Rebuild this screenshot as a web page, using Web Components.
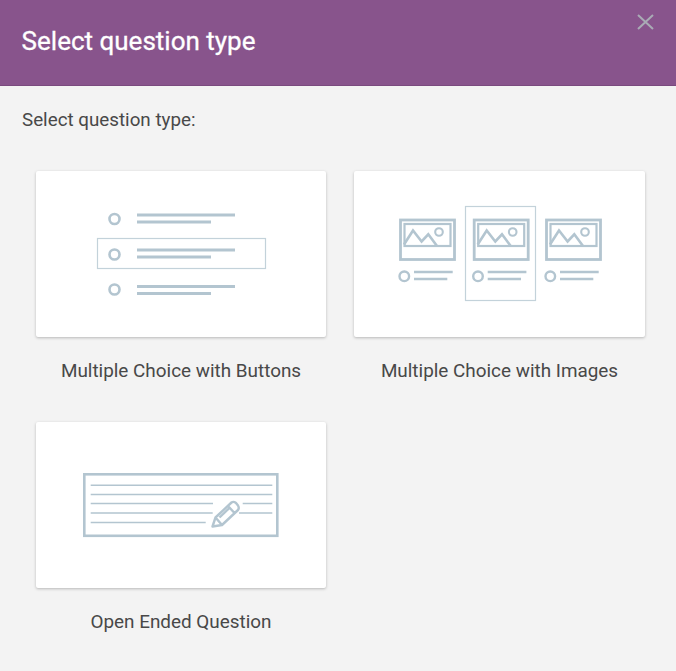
<!DOCTYPE html>
<html>
<head>
<meta charset="utf-8">
<title>Select question type</title>
<style>
    html, body { margin: 0; padding: 0; background: #f3f3f3; }
</style>
</head>
<body>
<question-dialog heading="Select question type" prompt="Select question type:">
    <type-card label="Multiple Choice with Buttons">
        <svg viewBox="36 171 290 166" fill="none" stroke="#b3c5d0">
            <rect x="97.5" y="238.5" width="168" height="30" stroke="#c3d2da" stroke-width="1.2"/>
            <g stroke-width="2.6">
                <circle cx="114.5" cy="219" r="5"/>
                <circle cx="114.5" cy="254.5" r="5"/>
                <circle cx="114.5" cy="289.5" r="5"/>
            </g>
            <g stroke-width="3">
                <path d="M137 215H235M137 222H211"/>
                <path d="M137 250H235M137 257H211"/>
                <path d="M137 286.5H235M137 293.5H211"/>
            </g>
        </svg>
    </type-card>
    <type-card label="Multiple Choice with Images">
        <svg viewBox="354 171 291 166" fill="none" stroke="#b3c5d0">
            <defs>
                <g id="pic">
                    <rect x="400.5" y="220" width="54" height="39.5" stroke-width="2.8"/>
                    <rect x="404.5" y="224" width="46" height="22" stroke-width="2.2"/>
                    <path d="M404 244.5L413 230.5L421.6 241.5L428.3 234.3L437 246" stroke-width="2.6"/>
                    <circle cx="439" cy="232" r="3.8" stroke-width="2.1"/>
                    <circle cx="404.3" cy="276.3" r="4.8" stroke-width="2.4"/>
                    <path d="M414 272H452.7M414 279H447.3" stroke-width="2.4"/>
                </g>
            </defs>
            <rect x="465.5" y="206.5" width="70" height="94" stroke="#c3d2da" stroke-width="1.2"/>
            <use href="#pic"/>
            <use href="#pic" x="73.7"/>
            <use href="#pic" x="146"/>
        </svg>
    </type-card>
    <type-card label="Open Ended Question">
        <svg viewBox="36 422 290 166" fill="none" stroke="#b3c5d0">
            <rect x="84.3" y="474.3" width="193" height="61.5" stroke-width="2.6"/>
            <path d="M90.7 485.3H272.3M90.7 494.5H272.3M90.7 503.5H213M242.7 503.5H272.3M90.7 513H212.7M239 513H272.3M90.7 522.5H205.7" stroke-width="1.5"/>
            <path d="M212.5 526.5L215.5 517.5L231.5 502.5Q233.5 501 236 503L238 505.5Q239.5 508 238 510L222 525ZM215.5 517.5L222 525M228 506L234.5 513M219.5 517.5L230 507.5" stroke-width="2.4" stroke-linejoin="round"/>
        </svg>
    </type-card>
</question-dialog>
<script>
class QuestionDialog extends HTMLElement {
    constructor() {
        super();
        this.attachShadow({ mode: 'open' });
    }

    connectedCallback() {
        this.shadowRoot.innerHTML = `
            <style>
                :host {
                    display: block;
                    font-family: 'Roboto', sans-serif;
                    height: 671px;
                    background: #f3f3f3;
                    color: #484848;
                }
                header {
                    box-sizing: border-box;
                    height: 86px;
                    background: #88548c;
                    border-bottom: 1px solid #7a4a7e;
                    color: #fff;
                    display: flex;
                    align-items: center;
                    padding: 0 22px 4px 21.6px;
                    position: relative;
                }
                h1 {
                    margin: 0;
                    font-size: 26px;
                    font-weight: 400;
                    -webkit-text-stroke: 0.3px #fff;
                }
                .close {
                    position: absolute;
                    top: 14px;
                    right: 22px;
                    width: 17px;
                    height: 16px;
                }
                p {
                    margin: 0;
                    padding: 23px 22px 0;
                    font-size: 18.8px;
                    line-height: 22px;
                }
                .grid {
                    display: grid;
                    grid-template-columns: 290px 291px;
                    column-gap: 28px;
                    row-gap: 20px;
                    padding: 40px 0 0 36px;
                }
            </style>
            <header>
                <h1>${this.getAttribute('heading')}</h1>
                <svg class="close" viewBox="0 0 17 16" stroke="#a9abb5" stroke-width="2" fill="none">
                    <path d="M1 1L16 15M16 1L1 15"/>
                </svg>
            </header>
            <p>${this.getAttribute('prompt')}</p>
            <div class="grid"><slot></slot></div>
        `;
    }
}

class TypeCard extends HTMLElement {
    constructor() {
        super();
        this.attachShadow({ mode: 'open' });
    }

    connectedCallback() {
        this.shadowRoot.innerHTML = `
            <style>
                :host {
                    display: block;
                }
                .card {
                    height: 166px;
                    background: #fff;
                    border-radius: 2px;
                    box-shadow: 0 1px 3px rgba(0, 0, 0, 0.25);
                }
                ::slotted(svg) {
                    display: block;
                    width: 100%;
                    height: 100%;
                }
                .label {
                    box-sizing: border-box;
                    height: 65px;
                    padding-top: 1px;
                    display: flex;
                    align-items: center;
                    justify-content: center;
                    font-size: 18.9px;
                }
            </style>
            <div class="card"><slot></slot></div>
            <div class="label">${this.getAttribute('label')}</div>
        `;
    }
}

customElements.define('question-dialog', QuestionDialog);
customElements.define('type-card', TypeCard);
</script>
</body>
</html>
